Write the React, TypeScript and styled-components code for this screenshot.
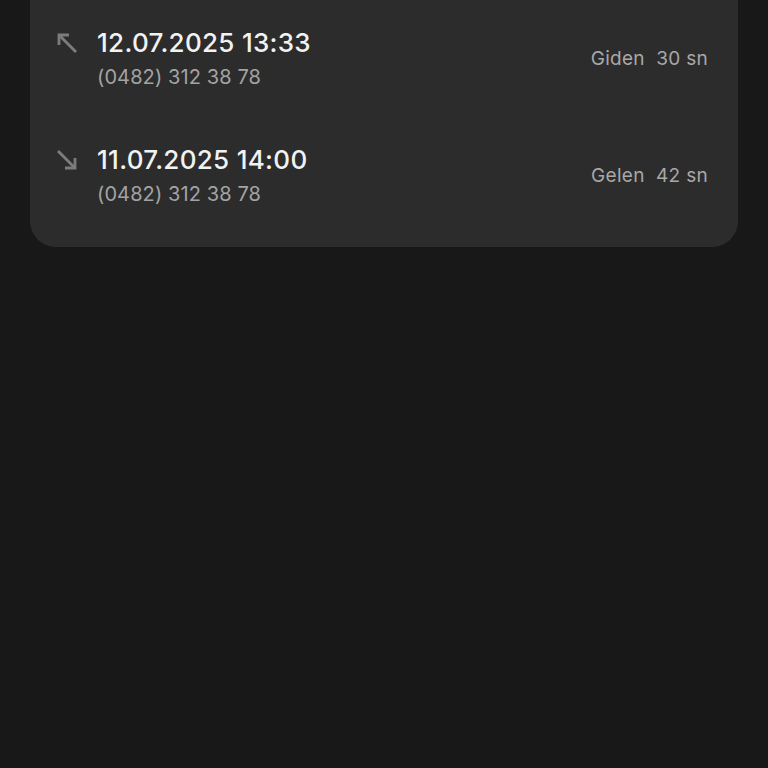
import React from "react";
import styled, { createGlobalStyle } from "styled-components";

const Global = createGlobalStyle`
  html, body { margin: 0; padding: 0; background: #181818; }
  body { font-family: Inter, "Noto Sans", sans-serif; -webkit-font-smoothing: antialiased; }
`;

const Page = styled.div`
  min-height: 768px;
  background: #181818;
  padding: 0 30px;
  box-sizing: border-box;
`;

const Card = styled.div`
  background: #2c2c2c;
  border-radius: 0 0 26px 26px;
  padding: 28px 30px 41px 26px;
  display: flex;
  flex-direction: column;
  gap: 56px;
`;

const Row = styled.div`
  display: flex;
  align-items: center;
`;

const IconCol = styled.div`
  align-self: flex-start;
  width: 22px;
  height: 30px;
  display: flex;
  align-items: center;
  margin-right: 19px;
  color: #7c7c7c;
`;

const Info = styled.div`
  flex: 1;
  display: flex;
  flex-direction: column;
  gap: 7px;
`;

const DateText = styled.div`
  font-size: 26px;
  line-height: 30px;
  font-weight: 500;
  color: #f2f2f2;
  letter-spacing: 0.3px;
`;

const Phone = styled.div`
  font-size: 20px;
  line-height: 24px;
  color: #a3a3a3;
  letter-spacing: 0.1px;
`;

const Meta = styled.div`
  font-size: 19px;
  line-height: 24px;
  color: #a8a8a8;
  white-space: pre;
  letter-spacing: 0.3px;
`;

const Arrow = ({ dir }: { dir: "out" | "in" }) => (
  <svg width="22" height="22" viewBox="0 0 22 22" fill="none" stroke="currentColor" strokeWidth="2.8" strokeLinecap="butt">
    {dir === "out" ? (
      <g>
        <path d="M20 20 L3.5 3.5" />
        <path d="M3 13 V3 H13" strokeLinejoin="miter" />
      </g>
    ) : (
      <g>
        <path d="M2 2 L18.5 18.5" />
        <path d="M19 9 V19 H9" strokeLinejoin="miter" />
      </g>
    )}
  </svg>
);

const calls = [
  { dir: "out" as const, date: "12.07.2025 13:33", phone: "(0482) 312 38 78", kind: "Giden", dur: "30 sn" },
  { dir: "in" as const, date: "11.07.2025 14:00", phone: "(0482) 312 38 78", kind: "Gelen", dur: "42 sn" },
];

export default function App() {
  return (
    <Page>
      <Global />
      <Card>
        {calls.map((c, i) => (
          <Row key={i}>
            <IconCol>
              <Arrow dir={c.dir} />
            </IconCol>
            <Info>
              <DateText>{c.date}</DateText>
              <Phone>{c.phone}</Phone>
            </Info>
            <Meta>{`${c.kind}  ${c.dur}`}</Meta>
          </Row>
        ))}
      </Card>
    </Page>
  );
}
